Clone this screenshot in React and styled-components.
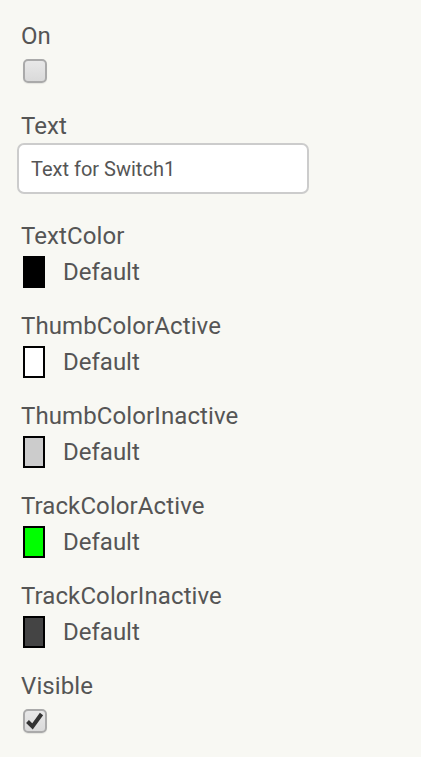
import React from 'react';
import styled, { createGlobalStyle } from 'styled-components';

const GlobalStyle = createGlobalStyle`
    html, body {
        margin: 0;
        padding: 0;
        background: #f8f8f3;
    }
`;

const colorProps = [
    { name: 'TextColor', color: '#000000' },
    { name: 'ThumbColorActive', color: '#ffffff' },
    { name: 'ThumbColorInactive', color: '#cccccc' },
    { name: 'TrackColorActive', color: '#00ff00' },
    { name: 'TrackColorInactive', color: '#444444' },
];

const CheckBox = ({ checked }) => (
    <Box>
        {checked && (
            <svg width="20" height="20" viewBox="0 0 20 20">
                <path d="M2.5 10.5 L7.5 15.5 L16.5 3" fill="none" stroke="#333" strokeWidth="4" />
            </svg>
        )}
    </Box>
);

export default function App() {
    return (
        <>
            <GlobalStyle />
            <Panel>
                <Property bottom="27px">
                    <Label>On</Label>
                    <CheckBox />
                </Property>
                <Property gap="4px" bottom="29px">
                    <Label>Text</Label>
                    <TextInput defaultValue="Text for Switch1" />
                </Property>
                {colorProps.map(prop => (
                    <Property key={prop.name}>
                        <Label>{prop.name}</Label>
                        <ColorRow>
                            <Swatch color={prop.color} />
                            <ColorName>Default</ColorName>
                        </ColorRow>
                    </Property>
                ))}
                <Property>
                    <Label>Visible</Label>
                    <CheckBox checked />
                </Property>
            </Panel>
        </>
    );
}

const Panel = styled.div`
    display: flex;
    flex-direction: column;
    padding: 23px 0 0 21px;
    min-height: 757px;
    box-sizing: border-box;
    font-family: Roboto, "Liberation Sans", sans-serif;
    color: #555555;
`;
const Property = styled.div`
    display: flex;
    flex-direction: column;
    align-items: flex-start;
    gap: ${({ gap }) => gap || '7px'};
    margin-bottom: ${({ bottom }) => bottom || '25px'};
`;
const Label = styled.div`
    font-size: 24px;
    line-height: 26px;
    letter-spacing: 0.1px;
`;
const Box = styled.div`
    width: 24px;
    height: 24px;
    margin: 3px 0 3px 2px;
    box-sizing: border-box;
    border: 2px solid #aaaaaa;
    border-radius: 5px;
    background: linear-gradient(#e8e8e8, #dadada);
    box-shadow: 0 1px 1px rgba(0, 0, 0, 0.08);
    display: flex;
    align-items: center;
    justify-content: center;
`;
const TextInput = styled.input`
    width: 292px;
    height: 51px;
    margin-left: -4px;
    box-sizing: border-box;
    border: 2px solid #cccccc;
    border-radius: 7px;
    background: #ffffff;
    padding: 0 12px;
    font-family: Roboto, "Liberation Sans", sans-serif;
    font-size: 20px;
    color: #555555;
    outline: none;
`;
const ColorRow = styled.div`
    display: flex;
    align-items: center;
    gap: 18px;
    padding-left: 2px;
`;
const Swatch = styled.div`
    width: 22px;
    height: 32px;
    box-sizing: border-box;
    border: 2px solid #000000;
    background: ${({ color }) => color};
`;
const ColorName = styled.span`
    font-size: 24px;
    line-height: 32px;
`;
